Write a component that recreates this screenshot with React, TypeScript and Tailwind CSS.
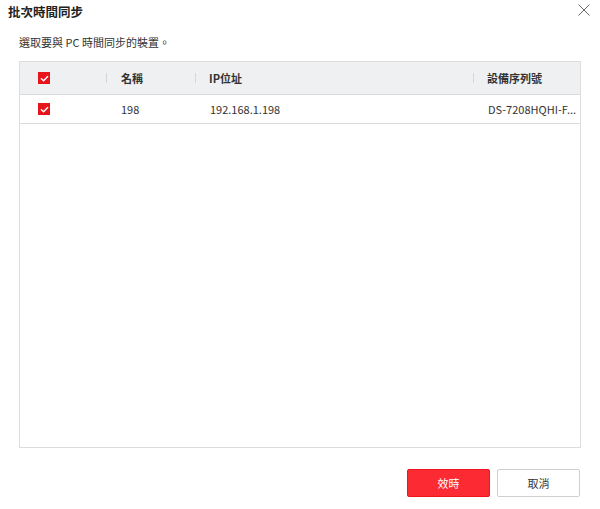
import React from "react";

const font = { fontFamily: '"Noto Sans CJK TC", "Noto Sans", sans-serif' };

function Check() {
  return (
    <span className="w-[12px] h-[12px] bg-[#e8141c] flex items-center justify-center">
      <svg width="9" height="9" viewBox="0 0 10 10">
        <path d="M1.5 5.2 L4 7.5 L8.5 2.8" stroke="#fff" strokeWidth="1.6" fill="none" strokeLinecap="round" strokeLinejoin="round" />
      </svg>
    </span>
  );
}

function Sep() {
  return <span className="w-px h-[10px] bg-[#d6d6d6] shrink-0" />;
}

export default function App() {
  return (
    <div className="w-[600px] h-[509px] bg-white text-[#333] flex flex-col" style={font}>
      <div className="flex justify-between items-start pl-[8px] pr-[10px] pt-[3px] h-[22px]">
        <span className="text-[12.5px] font-bold leading-[18px] text-[#222]">批次時間同步</span>
        <svg width="12" height="12" viewBox="0 0 12 12" className="mt-[1px]">
          <path d="M0.5 0.5 L11.5 11.5 M11.5 0.5 L0.5 11.5" stroke="#666" strokeWidth="1" />
        </svg>
      </div>
      <div className="pl-[19px] mt-[12px] text-[11px] leading-[16px] h-[16px]">選取要與 PC 時間同步的裝置。</div>
      <div className="mx-[19px] mt-[11px] h-[387px] border border-[#dcdcdc] flex flex-col">
        <div className="h-[33px] bg-[#eff0f2] flex items-center text-[11px] font-bold border-b border-[#dcdcdc]">
          <div className="w-[87px] pl-[18px] flex items-center justify-between">
            <Check />
            <Sep />
          </div>
          <div className="w-[89px] pl-[14px] flex items-center justify-between">
            <span>名稱</span>
            <Sep />
          </div>
          <div className="w-[278px] pl-[13px] flex items-center justify-between">
            <span>IP位址</span>
            <Sep />
          </div>
          <div className="pl-[13px]">設備序列號</div>
        </div>
        <div className="h-[29px] flex items-center text-[11px] border-b border-[#dcdcdc] whitespace-nowrap">
          <div className="w-[87px] pl-[18px] flex items-center">
            <Check />
          </div>
          <div className="w-[89px] pl-[14px]">198</div>
          <div className="w-[278px] pl-[14px]">192.168.1.198</div>
          <div className="pl-[14px]">DS-7208HQHI-F...</div>
        </div>
      </div>
      <div className="flex justify-end gap-[7px] pr-[20px] mt-[21px]">
        <button className="w-[83px] h-[28px] bg-[#fb2a33] border border-[#f0141e] text-white text-[11px] rounded-[2px]">效時</button>
        <button className="w-[83px] h-[28px] bg-white border border-[#cfcfcf] text-[#333] text-[11px] rounded-[2px]">取消</button>
      </div>
    </div>
  );
}
